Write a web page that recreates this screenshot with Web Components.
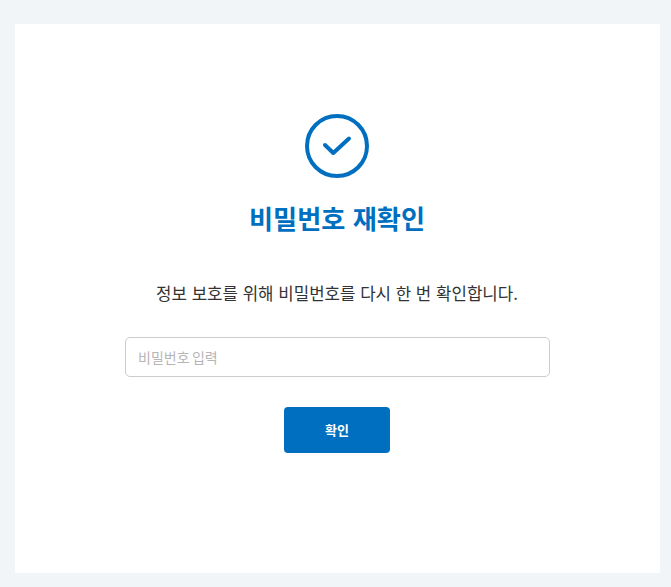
<!DOCTYPE html>
<html lang="ko"><head><meta charset="utf-8"><title>비밀번호 재확인</title>
<style>html,body{margin:0;height:100%;background:#f1f5f8}body{font-family:"Noto Sans CJK KR","Noto Sans",sans-serif}</style>
</head><body>
<confirm-page></confirm-page>
<script>
class CheckBadge extends HTMLElement{constructor(){super();this.attachShadow({mode:'open'}).innerHTML=`<style>:host{display:block;width:64px;height:64px}svg{display:block}</style>
<svg width="64" height="64" viewBox="0 0 64 64" fill="none" stroke="#006fbf"><circle cx="32" cy="32" r="30" stroke-width="4"/><path d="M20 31 L28.3 39 L44 24.5" stroke-width="4" stroke-linecap="round" stroke-linejoin="round"/></svg>`}}
customElements.define('check-badge',CheckBadge);
class PwInput extends HTMLElement{constructor(){super();this.attachShadow({mode:'open'}).innerHTML=`<style>:host{display:block;width:425px;height:40px}
input{box-sizing:border-box;display:block;width:100%;height:100%;border:1px solid #ccc;border-radius:5px;padding:0 12px;font:14px "Noto Sans CJK KR",sans-serif;word-spacing:-1.5px;background:#fff;outline:0}
input::placeholder{color:#b5b5b5;opacity:1}</style><input type="password" placeholder="비밀번호 입력">`}}
customElements.define('pw-input',PwInput);
class PrimaryBtn extends HTMLElement{constructor(){super();this.attachShadow({mode:'open'}).innerHTML=`<style>:host{display:block}
button{display:block;width:106px;height:46px;border:0;border-radius:4px;background:#006fbf;color:#fff;font:700 13px "Noto Sans CJK KR",sans-serif;padding:0 0 2px}</style><button><slot></slot></button>`}}
customElements.define('primary-btn',PrimaryBtn);
class ConfirmPage extends HTMLElement{constructor(){super();this.attachShadow({mode:'open'}).innerHTML=`<style>
:host{display:block;box-sizing:border-box;height:587px;padding:24px 11px 14px 15px}
.card{height:100%;box-sizing:border-box;background:#fff;padding-top:90px;display:flex;flex-direction:column;align-items:center}
check-badge,primary-btn{margin-right:1px}
h1{margin:15px 1px 0 0;font:700 26.2px/50px "Noto Sans CJK KR",sans-serif;color:#006fbf}
p{margin:38px 1px 0 0;font:400 16.8px/24px "Noto Sans CJK KR",sans-serif;color:#333}
pw-input{margin-top:32px}primary-btn{margin-top:30px}
</style><div class="card"><check-badge></check-badge><h1>비밀번호 재확인</h1><p>정보 보호를 위해 비밀번호를 다시 한 번 확인합니다.</p><pw-input></pw-input><primary-btn>확인</primary-btn></div>`}}
customElements.define('confirm-page',ConfirmPage);
</script></body></html>
